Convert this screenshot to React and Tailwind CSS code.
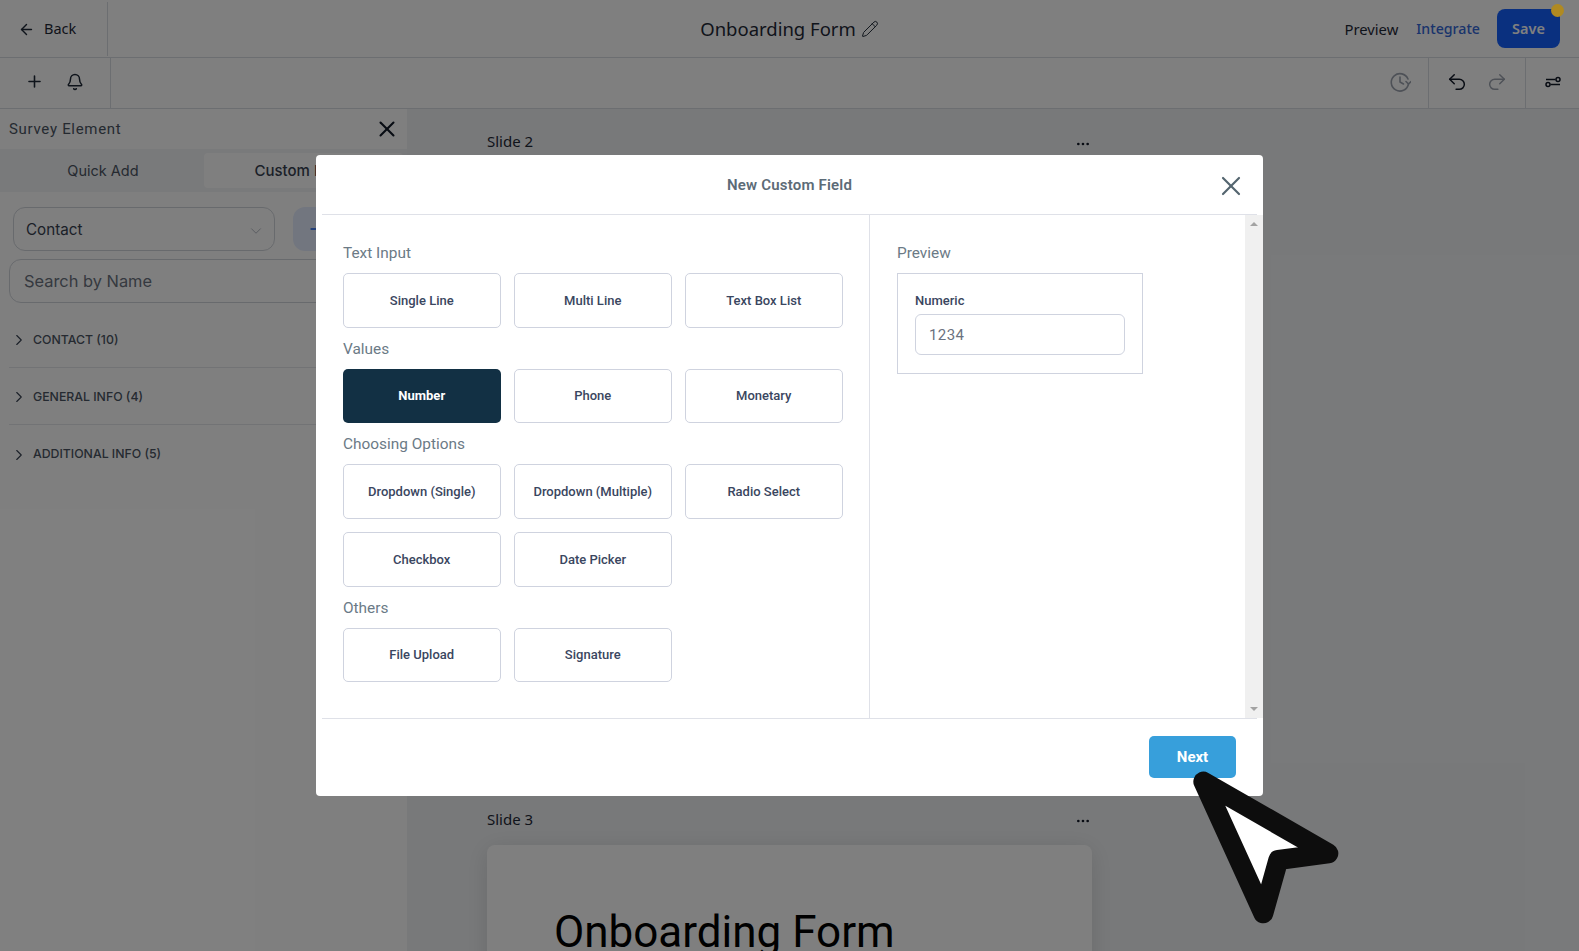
import React from "react";
import { ArrowLeft, Plus, Bell, X, ChevronDown, ChevronRight, Pencil, Undo2, Redo2, MoreHorizontal } from "lucide-react";

const sections = [
  { title: "Text Input", rows: [["Single Line", "Multi Line", "Text Box List"]] },
  { title: "Values", rows: [["Number", "Phone", "Monetary"]] },
  { title: "Choosing Options", rows: [["Dropdown (Single)", "Dropdown (Multiple)", "Radio Select"], ["Checkbox", "Date Picker"]] },
  { title: "Others", rows: [["File Upload", "Signature"]] },
];

const TopBar = () => (
  <div className="h-[58px] grid grid-cols-[1fr_auto_1fr] items-center border-b border-[#d8dce2] bg-white font-['Noto_Sans',sans-serif]">
    <div className="w-[108px] h-[54px] flex items-center gap-[9px] pl-[18px] pt-[1px] border-r border-[#d8dce2] text-[14.5px] text-[#1f2937]">
      <ArrowLeft size={17} />
      <span>Back</span>
    </div>
    <div className="flex items-center gap-[5px] text-[#1f2937]">
      <span className="text-[18.5px]">Onboarding Form</span>
      <Pencil size={18} strokeWidth={1.3} />
    </div>
    <div className="flex items-center justify-end">
      <span className="pt-[1px] text-[14.8px] text-[#1f2937]">Preview</span>
      <span className="pt-[1px] ml-[18px] text-[14.2px] font-medium text-[#3468d8]">Integrate</span>
      <span className="relative ml-[17px] mr-[19px] w-[63px] h-[39px] pt-[1px] rounded-lg bg-[#1460ff] text-[14.5px] text-white font-semibold flex items-center justify-center">Save</span>
    </div>
  </div>
);

const ToolBar = () => (
  <div className="h-[51px] flex items-center justify-between border-b border-[#d8dce2] bg-white">
    <div className="w-[111px] h-full flex items-center gap-[22px] pl-[25px] pb-[3px] border-r border-[#d8dce2] text-[#1f2937]">
      <Plus size={19} />
      <Bell size={18} />
    </div>
    <div className="flex h-full items-center">
      <div className="pr-[17px] pb-[3px]">
        <svg width="22" height="22" viewBox="0 0 22 22" fill="none" stroke="#9ca3af" strokeWidth="1.6" strokeLinecap="round" strokeLinejoin="round">
          <path d="M19.5 13A8.7 8.7 0 1 1 19 8" />
          <path d="M17 10.5l2.5 2.5 2.5-2.5" />
          <path d="M11 6v5l3.5 2" />
        </svg>
      </div>
      <div className="h-full flex items-center gap-[18px] px-[17px] pb-[3px] border-x border-[#d8dce2]">
        <Undo2 size={22} strokeWidth={1.6} className="text-[#111827]" />
        <Redo2 size={22} strokeWidth={1.6} className="text-[#9ca3af]" />
      </div>
      <div className="w-[53px] flex justify-center pb-[2px]">
        <svg width="16" height="14" viewBox="0 0 16 14" fill="none" stroke="#111827" strokeWidth="1.5">
          <path d="M1 4.5h9.5" />
          <circle cx="13" cy="4.5" r="2" />
          <path d="M15 9.5H5.5" />
          <circle cx="3" cy="9.5" r="2" />
        </svg>
      </div>
    </div>
  </div>
);

const Accordion = ({ label, last }) => (
  <div className={last ? "ml-[9px] h-[57px] pt-[2px] flex items-center gap-[5px] pl-[1px] text-[12.3px] font-medium text-[#4b5563]" : "ml-[9px] h-[57px] pt-[2px] flex items-center gap-[5px] pl-[1px] border-b border-[#e5e7eb] text-[12.3px] font-medium text-[#4b5563]"}>
    <ChevronRight size={18} strokeWidth={1.5} className="text-[#374151]" />
    <span>{label}</span>
  </div>
);

const SidePanel = () => (
  <div className="w-[407px] shrink-0 bg-white font-['Inter',sans-serif]">
    <div className="h-[40px] flex items-center justify-between pl-[9px] pr-[7px]">
      <span className="pt-[1px] text-[15px] text-[#4b5563] font-['Roboto',sans-serif] tracking-[0.7px]">Survey Element</span>
      <X size={26} strokeWidth={1.9} className="text-[#111827]" />
    </div>
    <div className="h-[43px] flex bg-[#f3f4f6] text-[14.5px]">
      <div className="w-[204px] pl-[2px] flex items-center justify-center text-[#4b5563]">Quick Add</div>
      <div className="w-[199px] my-[4px] pt-[1px] pl-[4px] rounded bg-white flex items-center justify-center text-[15px] font-medium text-[#374151]">Custom Fields</div>
    </div>
    <div className="flex gap-[18px] pl-[13px] mt-[15px]">
      <div className="w-[262px] h-[44px] rounded-xl border border-[#d1d5db] flex items-center justify-between pl-[12px] pr-[9px] text-[15.2px] text-[#374151]">
        <span className="pt-[2px]">Contact</span>
        <ChevronDown size={18} strokeWidth={1} className="text-[#9ca3af] mt-[3px]" />
      </div>
      <div className="w-[48px] h-[44px] rounded-xl bg-[#e5edff] flex items-center justify-center text-[#155eef]">
        <Plus size={20} />
      </div>
    </div>
    <div className="mx-[9px] mt-[8px] h-[44px] rounded-xl border border-[#d1d5db] flex items-center pl-[14px] text-[16.4px] text-[#6b7280]">Search by Name</div>
    <div className="mt-[8px] pr-[6px]">
      <Accordion label="CONTACT (10)" />
      <Accordion label="GENERAL INFO (4)" />
      <Accordion label="ADDITIONAL INFO (5)" last />
    </div>
  </div>
);

const SlideHead = ({ label }) => (
  <div className="w-[605px] flex items-center justify-between text-[15px] text-[#1f2937] font-['Noto_Sans',sans-serif]">
    <span>{label}</span>
    <MoreHorizontal size={16} className="text-[#111827] mr-[1px] mt-[5px]" />
  </div>
);

const Canvas = () => (
  <div className="flex-1 bg-[#f1f3f5] pl-[80px] pt-[21px] overflow-hidden">
    <SlideHead label="Slide 2" />
    <div className="mt-[655px]">
      <SlideHead label="Slide 3" />
    </div>
    <div className="w-[605px] h-[300px] mt-[15px] rounded-lg bg-white shadow-[0_4px_24px_rgba(0,0,0,0.12)] pl-[67px] pt-[61px]">
      <div className="text-[44px] leading-[52px] text-black font-['Roboto',sans-serif]">Onboarding Form</div>
    </div>
  </div>
);

const FieldButton = ({ label }) => {
  const active = label === "Number";
  return (
    <div
      className={
        active
          ? "h-[54.5px] rounded-[5px] bg-[#123044] text-white font-bold flex items-center justify-center text-[13px]"
          : "h-[54.5px] rounded-[5px] border border-[#cfd3df] text-[#3a4660] font-medium flex items-center justify-center text-[13px]"
      }
    >
      {label}
    </div>
  );
};

const Modal = () => (
  <div className="absolute left-[316px] top-[155px] w-[947px] h-[641px] rounded bg-white flex flex-col font-['Roboto',sans-serif]">
    <div className="h-[59px] shrink-0 relative flex items-center justify-center">
      <span className="pt-[2px] text-[15px] font-semibold text-[#5c6b77] tracking-[0.2px]">New Custom Field</span>
      <X size={32} strokeWidth={1.6} className="absolute right-[16px] top-[15px] text-[#54656f]" />
    </div>
    <div className="h-px shrink-0 mx-[6px] bg-[#dfe1e8]" />
    <div className="h-[503px] shrink-0 flex">
      <div className="w-[554px] shrink-0 border-r border-[#dfe1e8] pl-[27px] pt-[26px]">
        {sections.map((section) => (
          <div key={section.title} className="mb-[9px]">
            <div className="text-[15.4px] leading-[24px] text-[#6b7a86] mb-[8px]">{section.title}</div>
            <div className="flex flex-col gap-[13.5px]">
              {section.rows.map((row) => (
                <div key={row[0]} className="grid grid-cols-[157.5px_157.5px_157.5px] gap-x-[13.5px]">
                  {row.map((label) => (
                    <FieldButton key={label} label={label} />
                  ))}
                </div>
              ))}
            </div>
          </div>
        ))}
      </div>
      <div className="flex-1 pl-[27px] pt-[26px]">
        <div className="text-[15.4px] leading-[24px] text-[#6b7a86] mb-[8px]">Preview</div>
        <div className="w-[246px] h-[101px] border border-[#cfd3df] pl-[17px] pt-[19px]">
          <div className="text-[13px] leading-[16px] font-medium text-[#3a4660] mb-[5px]">Numeric</div>
          <div className="w-[210px] h-[41px] pt-[2px] rounded-md border border-[#cfd3df] pl-[13px] flex items-center text-[15px] text-[#6b7280] tracking-[0.4px]">1234</div>
        </div>
      </div>
      <div className="w-[18px] shrink-0 bg-[#f0f0f0] flex flex-col items-center justify-between pt-[7px] pb-[7px]">
        <div className="w-0 h-0 border-x-[4px] border-x-transparent border-b-[4px] border-b-[#a3a3a3]" />
        <div className="w-0 h-0 border-x-[4px] border-x-transparent border-t-[4px] border-t-[#a3a3a3]" />
      </div>
    </div>
    <div className="h-px shrink-0 mx-[6px] bg-[#dfe1e8]" />
    <div className="flex-1 flex items-start justify-end pr-[27px] pt-[17px]">
      <div className="w-[87px] h-[42px] rounded-[5px] bg-[#379fdb] text-white font-bold text-[15px] flex items-center justify-center">Next</div>
    </div>
  </div>
);

const Cursor = () => (
  <svg className="absolute left-[1120px] top-[690px]" width="240" height="261" viewBox="0 0 720 783">
    <path
      d="M250 275 L625 490 L475 510 L430 670 Z"
      fill="#ffffff"
      stroke="#0d0d0d"
      strokeWidth="60"
      strokeLinejoin="round"
    />
  </svg>
);

export default function App() {
  return (
    <div className="relative w-[1579px] h-[951px] overflow-hidden bg-white">
      <TopBar />
      <ToolBar />
      <div className="flex h-[842px]">
        <SidePanel />
        <Canvas />
      </div>
      <div className="absolute inset-0 bg-black/50" />
      <div className="absolute left-[1551px] top-[4px] w-[13px] h-[13px] rounded-full bg-[#b08a22]" />
      <Modal />
      <Cursor />
    </div>
  );
}
